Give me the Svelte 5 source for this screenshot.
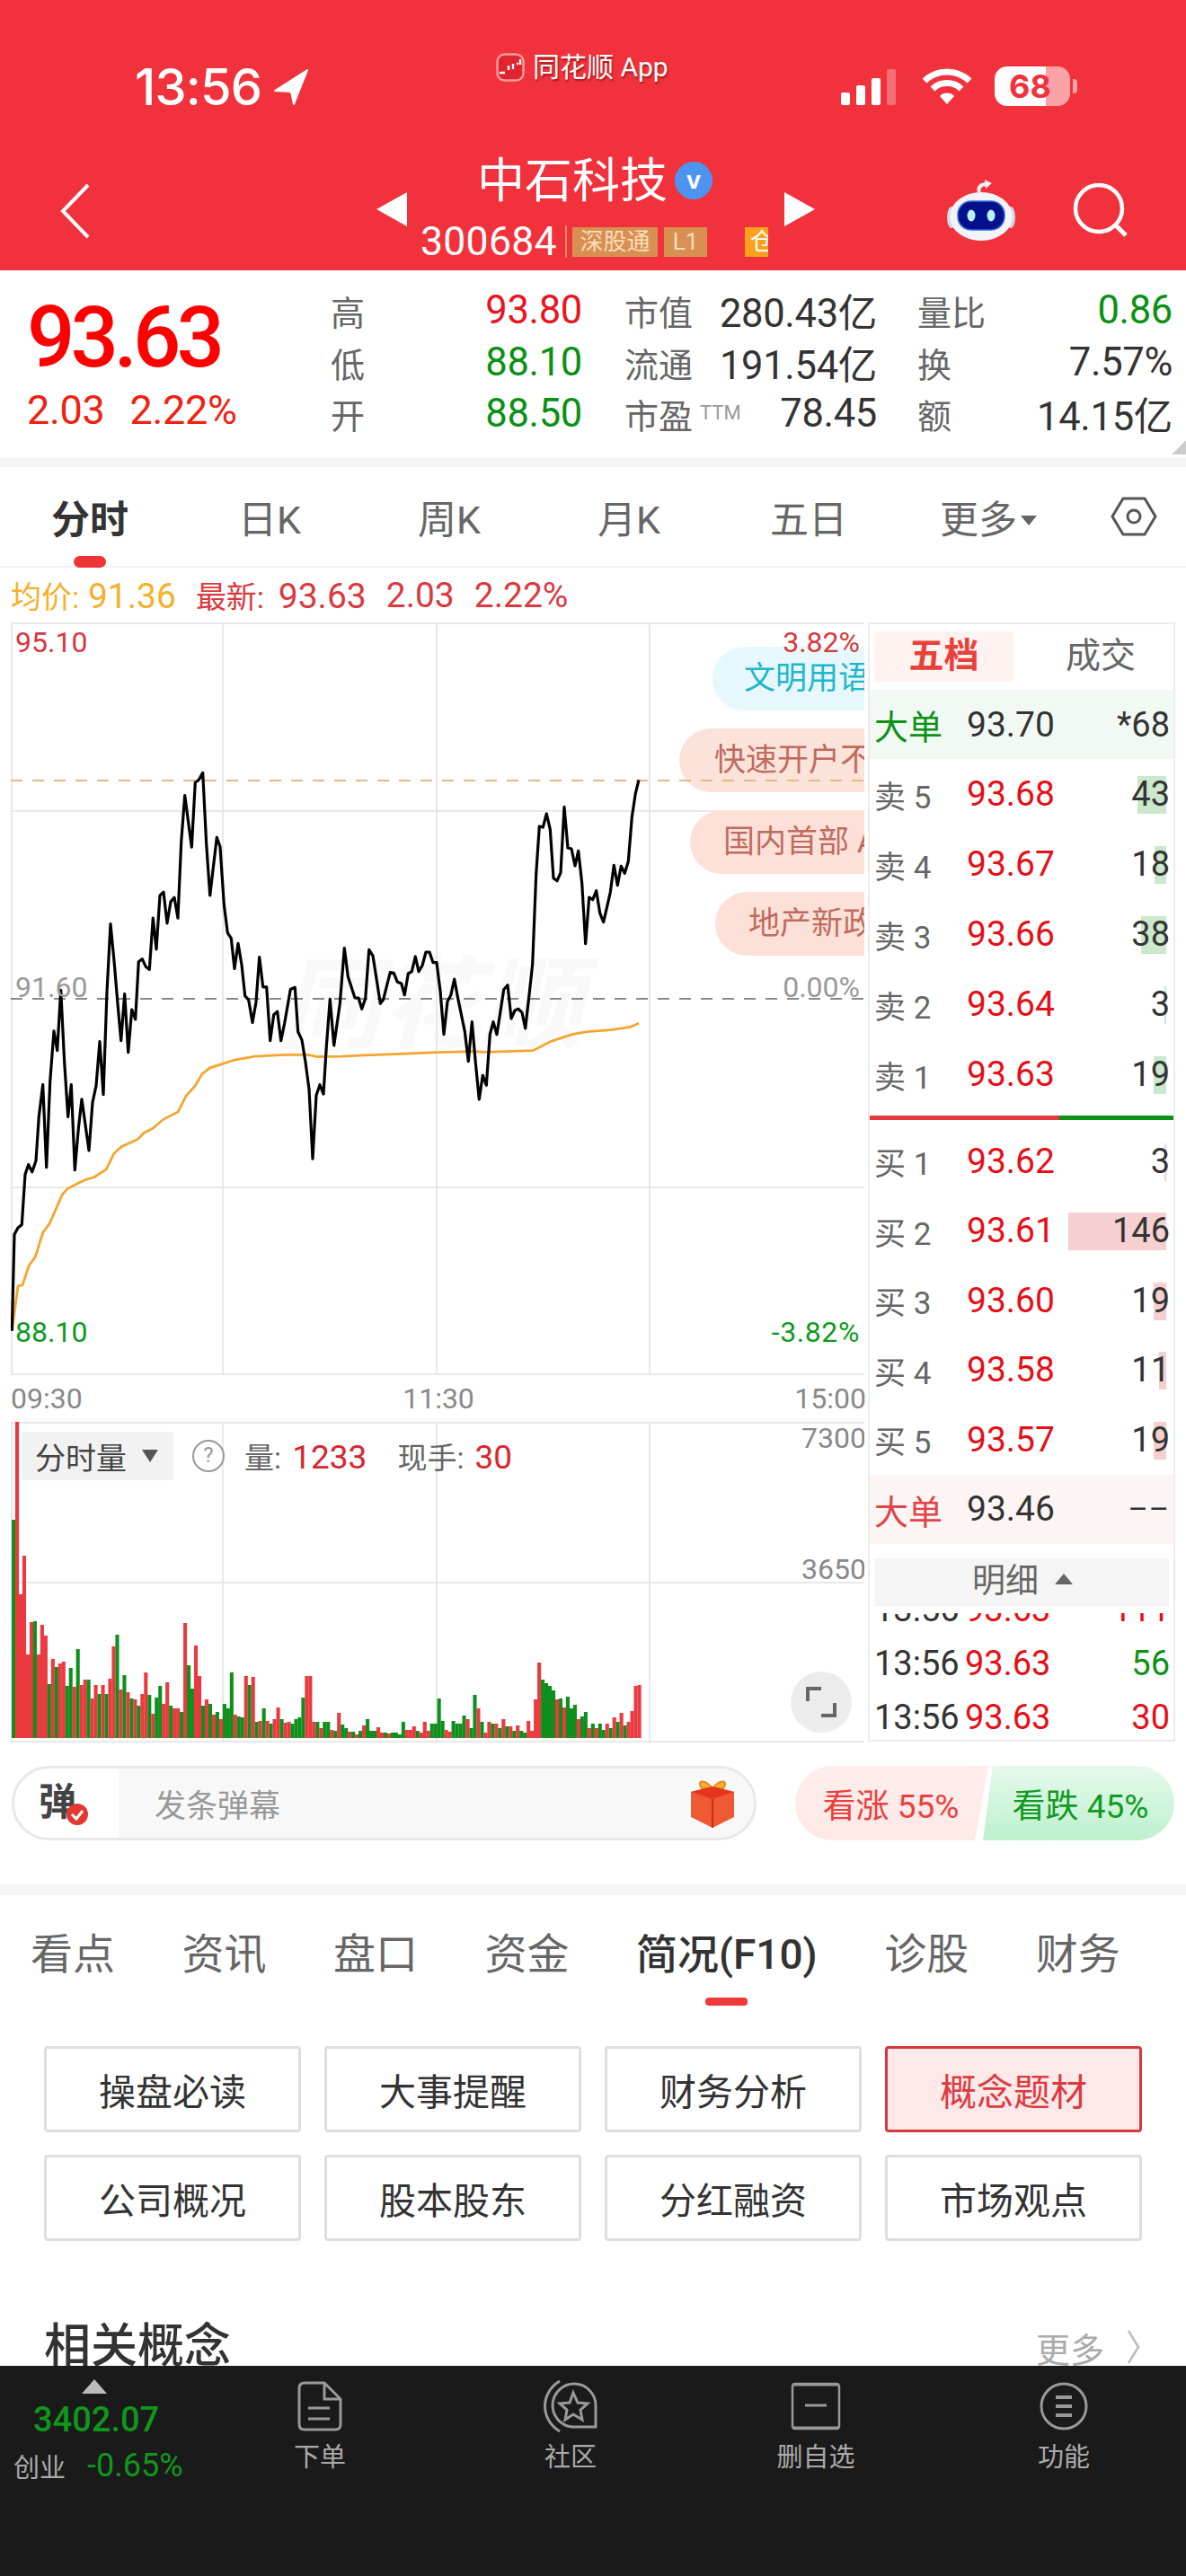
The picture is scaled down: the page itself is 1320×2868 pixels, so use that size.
<script>
  const z8 = [[40,1480],[48,1232],[60,1215],[73,1207],[84,1078],[95,1053],[107,1072],[120,1043],[130,930],[143,848],[155,1060],[167,840],[180,710],[191,760],[203,605],[215,790],[227,930],[238,848],[250,1067],[262,960],[273,885],[297,1017],[309,893],[321,850],[333,737],[345,873],[357,610],[369,435],[381,530],[393,640],[404,735],[416,615],[428,765],[440,655],[452,680],[463,532],[475,525],[487,545],[499,552],[511,420],[522,500],[534,362],[546,353],[558,433],[570,378],[582,367],[594,420],[605,225],[617,105],[640,238],[652,72],[664,65],[677,47],[689,230],[701,362],[724,213],[735,237],[748,385],[760,458],[772,472],[783,550],[795,485],[807,540],[818,620],[830,630],[843,688],[855,635],[866,520],[878,597],[890,597],[902,735],[914,668],[926,660],[938,735],[950,690],[970,603],[985,598],[995,712],[1008,733],[1020,790],[1032,860],[1044,1038],[1056,875],[1068,848],[1080,872],[1090,750],[1102,628],[1115,747],[1135,640],[1150,497],[1162,570],[1185,625],[1197,625]];
  const z9 = [[248,850],[260,815],[272,652],[285,672],[310,832],[320,818],[343,728],[355,730],[367,760],[380,765],[391,803],[403,732],[415,725],[427,675],[438,725],[450,705],[462,660],[474,660],[486,695],[498,695],[510,790],[522,935],[534,825],[545,805],[557,750],[569,815],[592,925],[604,1025],[616,893],[628,1030],[640,1152],[652,1072],[664,1105],[676,935],[687,893],[699,935],[722,785],[735,770],[747,882],[759,855],[771,850],[783,862],[794,915],[806,810],[818,700],[830,400],[841,240],[853,243],[865,198],[877,250],[888,413],[900,422],[912,395],[924,175],[936,312],[948,315],[960,372],[971,322],[983,430],[995,632],[1007,477],[1019,485],[1031,455],[1043,530],[1055,560],[1078,460],[1090,370],[1102,437],[1114,373],[1126,397],[1138,357],[1150,210],[1162,130],[1173,85]];
  const a8 = [[40,1480],[60,1365],[75,1362],[97,1312],[118,1290],[143,1228],[165,1205],[185,1170],[208,1130],[225,1115],[255,1103],[285,1092],[315,1085],[355,1065],[380,1025],[405,1007],[460,988],[480,972],[510,960],[545,937],[595,917],[620,878],[652,850],[675,820],[700,805],[780,785],[850,775],[950,771],[1030,771],[1060,776],[1140,775],[1200,773]];
  const a9 = [[280,1004],[500,995],[620,992],[660,994],[820,989],[880,958],[950,935],[1000,926],[1080,920],[1145,910],[1173,898]];
  const toPts = (p8, p9) => [
    ...p8.map(([x, y]) => [x / 3 - 12, 840 + y / 2.306 - 693]),
    ...p9.map(([x, y]) => [x / 3 + 320 - 12, 840 + y / 3 - 693])
  ].map(([x, y]) => x.toFixed(1) + ',' + y.toFixed(1)).join(' ');
  const priceLine = toPts(z8, z9);
  const avgLine = toPts(a8, a9);

  const r = 'r', g = 'g';
  const vols = [[243,g],[352,r],[160,r],[203,r],[93,r],[129,r],[130,g],[93,r],[126,r],[114,r],[60,g],[88,r],[79,g],[83,r],[85,r],[58,g],[78,g],[57,r],[99,g],[59,r],[65,r],[65,g],[44,r],[59,r],[49,g],[59,r],[49,g],[66,r],[102,r],[115,g],[54,r],[70,g],[51,r],[44,g],[43,r],[36,g],[49,r],[73,r],[48,g],[27,r],[45,g],[58,g],[38,r],[62,r],[36,g],[33,r],[33,r],[29,g],[128,r],[81,g],[55,g],[103,r],[69,r],[36,g],[43,r],[38,g],[26,r],[29,g],[21,r],[38,g],[33,g],[73,g],[26,r],[24,g],[23,g],[69,r],[59,g],[68,r],[18,g],[19,r],[33,g],[19,r],[16,g],[21,r],[34,r],[21,g],[17,r],[18,r],[16,g],[21,g],[23,g],[45,g],[69,r],[69,r],[18,r],[18,g],[11,r],[18,g],[18,g],[9,r],[8,g],[28,r],[15,g],[11,g],[7,r],[7,g],[4,r],[8,g],[14,r],[21,g],[8,g],[8,g],[12,r],[6,r],[6,g],[5,r],[6,g],[6,g],[4,g],[18,g],[9,r],[9,r],[13,r],[8,g],[6,r],[18,r],[8,r],[16,g],[16,g],[44,g],[19,g],[9,r],[7,r],[19,g],[16,g],[16,g],[25,g],[21,r],[11,g],[48,g],[33,r],[18,g],[6,r],[18,r],[16,g],[16,r],[11,g],[21,r],[13,g],[13,r],[8,g],[14,r],[8,g],[6,g],[19,r],[8,r],[43,r],[84,r],[65,g],[61,g],[58,g],[53,g],[43,r],[44,g],[34,r],[46,g],[33,g],[37,g],[21,r],[24,g],[29,g],[11,r],[16,g],[11,r],[16,g],[9,g],[16,r],[11,g],[23,r],[18,g],[28,r],[14,g],[18,r],[30,r],[58,r],[59,r]];

  const topStats = [
    [{ l: '高', v: '93.80', c: 'red' }, { l: '低', v: '88.10', c: 'green' }, { l: '开', v: '88.50', c: 'green' }],
    [{ l: '市值', v: '280.43亿' }, { l: '流通', v: '191.54亿' }, { l: '市盈', sup: 'TTM', v: '78.45' }],
    [{ l: '量比', v: '0.86', c: 'green' }, { l: '换', v: '7.57%' }, { l: '额', v: '14.15亿' }]
  ];
  const tabs = ['分时', '日K', '周K', '月K', '五日'];
  const sells = [['卖 5', '93.68', '43', 32], ['卖 4', '93.67', '18', 13], ['卖 3', '93.66', '38', 28], ['卖 2', '93.64', '3', 2], ['卖 1', '93.63', '19', 14]];
  const buys = [['买 1', '93.62', '3', 2], ['买 2', '93.61', '146', 109], ['买 3', '93.60', '19', 14], ['买 4', '93.58', '11', 8], ['买 5', '93.57', '19', 14]];
  const sections = ['看点', '资讯', '盘口', '资金', '简况(F10)', '诊股', '财务'];
  const btns = ['操盘必读', '大事提醒', '财务分析', '概念题材', '公司概况', '股本股东', '分红融资', '市场观点'];
</script>

<div class="page">
  <header class="hdr">
    <div class="status">
      <div class="st-left">
        <span class="clock">13:56</span>
        <svg width="42" height="42" viewBox="0 0 42 42"><path d="M39 2 L3 25 L21 26 L24 40 Z" fill="#fff" stroke="#fff" stroke-width="2" stroke-linejoin="round"/></svg>
      </div>
      <div class="st-mid">
        <svg width="32" height="32" viewBox="0 0 32 32"><rect x="1.5" y="1.5" width="29" height="29" rx="8" fill="#de2530" stroke="#f99" stroke-width="2.5"/><path d="M4 22 H10 M14 19 V14 M19 18 V12 M23 12 H25 M27 13 V7" stroke="#fff" stroke-width="2.4"/></svg>
        <span>同花顺 App</span>
      </div>
      <div class="st-right">
        <svg width="66" height="42" viewBox="0 0 66 42"><rect x="1" y="28" width="10" height="14" rx="2" fill="#fff"/><rect x="18" y="20" width="10" height="22" rx="2" fill="#fff"/><rect x="35" y="12" width="10" height="30" rx="2" fill="#fff"/><rect x="52" y="2" width="10" height="40" rx="2" fill="#fff" opacity=".3"/></svg>
        <svg width="58" height="42" viewBox="0 0 58 42"><g fill="none" stroke="#fff" stroke-width="7"><path d="M4 15 A36 36 0 0 1 54 15"/><path d="M13 24 A23 23 0 0 1 45 24"/></g><path d="M21 32 A11 11 0 0 1 37 32 L29 41 Z" fill="#fff"/></svg>
        <div class="batt"><span>68</span></div>
      </div>
    </div>
    <div class="titlebar">
      <svg class="back" width="36" height="62" viewBox="0 0 36 62"><path d="M32 2 L4 31 L32 60" fill="none" stroke="#fff" stroke-width="4"/></svg>
      <div class="arrow-l"></div>
      <div class="title-mid">
        <div class="t-name">中石科技<span class="vbadge">v</span></div>
        <div class="t-code"><span class="code">300684</span><span class="sep"></span><span class="tag">深股通</span><span class="tag l1">L1</span><span class="tag cang">仓</span></div>
      </div>
      <div class="arrow-r"></div>
      <svg class="robot" width="76" height="68" viewBox="0 0 76 68">
        <path d="M36 14 C34 8 38 5 44 5" fill="none" stroke="#f0f0f4" stroke-width="4"/>
        <path d="M42 0 L50 4 L43 10 Z" fill="#f0f0f4"/>
        <ellipse cx="5" cy="42" rx="5" ry="12" fill="#cfd6e6"/><ellipse cx="71" cy="42" rx="5" ry="12" fill="#cfd6e6"/>
        <ellipse cx="38" cy="41" rx="35" ry="27" fill="#f2f4fa"/>
        <rect x="12" y="24" width="52" height="32" rx="15" fill="#05118c" stroke="#3a6be0" stroke-width="1.5"/>
        <ellipse cx="27" cy="40" rx="4.5" ry="6.5" fill="#b8f1f8"/><ellipse cx="49" cy="40" rx="4.5" ry="6.5" fill="#b8f1f8"/>
      </svg>
      <svg class="search" width="64" height="64" viewBox="0 0 64 64"><circle cx="31" cy="28" r="26" fill="none" stroke="#fff" stroke-width="4.5"/><path d="M50 47 L61 58" stroke="#fff" stroke-width="5"/></svg>
    </div>
  </header>

  <section class="quote">
    <div class="q-main">
      <div class="q-price">93.63</div>
      <div class="q-chg"><span>2.03</span><span>2.22%</span></div>
    </div>
    {#each topStats as col, i}
      <div class="q-col q-col{i}">
        {#each col as s}
          <div class="q-row">
            <span class="q-l">{s.l}{#if s.sup}<sup>{s.sup}</sup>{/if}</span>
            <span class="q-v {s.c ?? ''}">{s.v}</span>
          </div>
        {/each}
      </div>
    {/each}
    <div class="corner"></div>
  </section>
  <div class="band band1"></div>

  <nav class="ktabs">
    {#each tabs as t, i}
      <div class="ktab" class:on={i === 0}>{t}</div>
    {/each}
    <div class="ktab more">更多<span class="caret"></span></div>
    <svg class="hex" width="52" height="46" viewBox="0 0 52 46"><path d="M14 3 H38 L50 23 L38 43 H14 L2 23 Z" fill="none" stroke="#555" stroke-width="3"/><circle cx="26" cy="23" r="7" fill="none" stroke="#555" stroke-width="3"/></svg>
  </nav>

  <div class="legend">
    <span class="avg"><i>均价:</i> 91.36</span>
    <span class="latest"><i>最新:</i> 93.63</span><span class="latest">2.03</span><span class="latest">2.22%</span>
  </div>

  <div class="market">
    <div class="charts">
      <div class="pricechart">
        <svg width="950" height="838" viewBox="0 0 950 838">
          <text class="wm" x="300" y="465">同花顺</text>
          <g stroke="#e8e8e8" stroke-width="2">
            <path d="M1 0 V838 M236 0 V838 M474 0 V838 M711 0 V838"/>
            <path d="M0 1 H950 M0 210 H950 M0 629 H950 M0 837 H950"/>
          </g>
        </svg>
        <span class="pill p1">文明用语</span>
        <span class="pill p2">快速开户不</span>
        <span class="pill p3">国内首部 A</span>
        <span class="pill p4">地产新政</span>
        <svg class="lines" width="950" height="838" viewBox="0 0 950 838">
          <path d="M0 176 H950" stroke="#e5b88c" stroke-width="2" stroke-dasharray="13 11"/>
          <path d="M0 419 H950" stroke="#888" stroke-width="2" stroke-dasharray="13 11"/>
          <polyline points={avgLine} fill="none" stroke="#f3a530" stroke-width="2.8"/>
          <polyline points={priceLine} fill="none" stroke="#000" stroke-width="3.2" stroke-linejoin="round"/>
        </svg>
        <span class="pl tl red2">95.10</span>
        <span class="pl tr red2">3.82%</span>
        <span class="pl ml">91.60</span>
        <span class="pl mr">0.00%</span>
        <span class="pl bl green2">88.10</span>
        <span class="pl br green2">-3.82%</span>
      </div>
      <div class="times"><span>09:30</span><span>11:30</span><span>15:00</span></div>
      <div class="volchart">
        <svg width="950" height="358" viewBox="0 0 950 358">
          <g stroke="#e8e8e8" stroke-width="2">
            <path d="M1 0 V358 M236 0 V358 M474 0 V358 M711 0 V358"/>
            <path d="M0 1 H950 M0 179 H950 M0 356 H950"/>
          </g>
          {#each vols as [h, c], i}
            <rect x={i * 3.98 + 1} y={352 - h} width="4.1" height={h} fill={c === 'r' ? '#ea3a3f' : '#0f8f1c'}/>
          {/each}
        </svg>
        <div class="vol-head">
          <span class="vol-sel">分时量<span class="vcaret"></span></span>
          <span class="help">?</span>
          <span class="vt">量: <b>1233</b></span>
          <span class="vt">现手: <b>30</b></span>
        </div>
        <span class="vl v1">7300</span>
        <span class="vl v2">3650</span>
        <div class="expand"><svg width="34" height="34" viewBox="0 0 34 34"><path d="M2 16 V2 H17 M32 18 V32 H17" fill="none" stroke="#666" stroke-width="4"/></svg></div>
      </div>
    </div>

    <aside class="book">
      <div class="bk-tabs"><span class="bk-on">五档</span><span class="bk-off">成交</span></div>
      <div class="bk-big gbg"><span class="bl-n gtxt">大单</span><span class="bl-p">93.70</span><span class="bl-q">*68</span></div>
      {#each sells as [n, p, q, w]}
        <div class="bk-row s"><span class="bl-n">{n}</span><span class="bl-p redp">{p}</span><span class="bl-q">{q}<i class="vb g" style="width:{w}px"></i></span></div>
      {/each}
      <div class="divider"><i></i><b></b></div>
      {#each buys as [n, p, q, w]}
        <div class="bk-row b"><span class="bl-n">{n}</span><span class="bl-p redp">{p}</span><span class="bl-q">{q}<i class="vb r" style="width:{w}px"></i></span></div>
      {/each}
      <div class="bk-big rbg"><span class="bl-n rtxt">大单</span><span class="bl-p">93.46</span><span class="bl-q dash">––</span></div>
      <div class="mx">明细<span class="mxcaret"></span></div>
      <div class="ticks">
        <div class="tick clip"><span>13:56</span><span class="redp">93.63</span><span class="redp tq">111</span></div>
        <div class="tick"><span>13:56</span><span class="redp">93.63</span><span class="gq tq">56</span></div>
        <div class="tick"><span>13:56</span><span class="redp">93.63</span><span class="redp tq">30</span></div>
      </div>
    </aside>
  </div>

  <div class="actions">
    <div class="dm">
      <div class="dm-l"><span class="dan">弹</span><svg class="dm-check" width="24" height="24" viewBox="0 0 24 24"><circle cx="12" cy="12" r="12" fill="#e5362f"/><path d="M6 12 L11 17 L18 8" fill="none" stroke="#fff" stroke-width="3"/></svg></div>
      <div class="dm-r">
        <span>发条弹幕</span>
        <svg width="52" height="54" viewBox="0 0 52 54"><path d="M26 10 C16 -2 8 2 14 10 Z M26 10 C36 -2 44 2 38 10 Z" fill="#f4b32f" stroke="#e98a1c" stroke-width="2"/><path d="M2 14 L26 8 L50 14 V42 L26 54 L2 42 Z" fill="#ef5a34"/><path d="M2 14 L26 22 L50 14 L26 8 Z" fill="#e4351e"/><path d="M26 22 V54" stroke="#c92a16" stroke-width="2"/></svg>
      </div>
    </div>
    <div class="vote">
      <div class="up">看涨 55%</div>
      <div class="down">看跌 45%</div>
    </div>
  </div>
  <div class="band band2"></div>

  <nav class="stabs">
    {#each sections as s, i}
      <div class="stab s{i}" class:on={i === 4}>{s}</div>
    {/each}
  </nav>

  <div class="btngrid">
    {#each btns as b, i}
      <div class="btn" class:act={i === 3}>{b}</div>
    {/each}
  </div>

  <div class="concept">
    <h2>相关概念</h2>
    <span class="cmore">更多<svg width="18" height="40" viewBox="0 0 18 40"><path d="M3 2 L14 20 L3 38" fill="none" stroke="#bbb" stroke-width="2.5"/></svg></span>
  </div>

  <footer class="foot">
    <div class="idx">
      <div class="tri"></div>
      <div class="idx-v">3402.07</div>
      <div class="idx-b"><span>创业</span><b>-0.65%</b></div>
    </div>
    <div class="fi f1">
      <svg width="50" height="56" viewBox="0 0 50 56"><path d="M2 8 Q2 2 8 2 H30 L48 20 V48 Q48 54 42 54 H8 Q2 54 2 48 Z M30 2 V20 H48" fill="none" stroke="#999" stroke-width="3"/><path d="M12 30 H36 M12 42 H36" stroke="#999" stroke-width="3"/></svg>
      <span>下单</span>
    </div>
    <div class="fi f2">
      <svg width="60" height="58" viewBox="0 0 60 58"><path d="M18 1 C-4 14 -4 44 18 57" fill="none" stroke="#999" stroke-width="3"/><path d="M58 52 H32 A24 24 0 1 1 58 29 Z" fill="none" stroke="#999" stroke-width="3"/><path d="M33 14 L38 25 L49 26 L41 33 L43 44 L33 38 L24 44 L26 33 L18 26 L29 25 Z" fill="none" stroke="#999" stroke-width="3"/></svg>
      <span>社区</span>
    </div>
    <div class="fi f3">
      <svg width="56" height="54" viewBox="0 0 56 54"><rect x="2" y="2" width="52" height="50" rx="3" fill="none" stroke="#999" stroke-width="2.5"/><path d="M2 3 H54 M2 51 H54" stroke="#999" stroke-width="3"/><path d="M16 26 H40" stroke="#999" stroke-width="3"/></svg>
      <span>删自选</span>
    </div>
    <div class="fi f4">
      <svg width="54" height="54" viewBox="0 0 54 54"><circle cx="27" cy="27" r="25" fill="none" stroke="#999" stroke-width="3"/><path d="M18 17 H36 M18 27 H36 M18 37 H36" stroke="#999" stroke-width="4"/></svg>
      <span>功能</span>
    </div>
  </footer>
</div>

<style>
  :global(body) { margin: 0; background: #fff; }
  .page {
    width: 1320px; height: 2868px; overflow: hidden; position: relative; background: #fff;
    font-family: Roboto, "Noto Sans CJK SC", sans-serif; color: #333;
  }
  svg { display: block; }
  i { font-style: normal; }

  /* header */
  .hdr { background: #f1323c; height: 301px; color: #fff; }
  .status { height: 160px; position: relative; display: flex; justify-content: space-between; align-items: flex-start; padding: 74px 129px 0 150px; box-sizing: border-box; }
  .st-left { display: flex; align-items: center; gap: 12px; }
  .clock { font: 500 56px/46px Inter, Roboto, sans-serif; letter-spacing: -.8px; }
  .st-mid { position: absolute; left: 552px; top: 58px; display: flex; align-items: center; gap: 9px; font-size: 30px; line-height: 34px; text-shadow: 1px 2px 2px rgba(90,0,0,.55); }
  .st-right { display: flex; align-items: center; gap: 24px; }
  .batt { position: relative; width: 84px; height: 44px; border-radius: 14px; background: linear-gradient(90deg, #fff 68%, #f9a3a6 68%); display: flex; align-items: center; padding-left: 16px; box-sizing: border-box; }
  .batt span { color: #f1323c; font: 700 36px/1 Inter, sans-serif; }
  .batt::after { content: ''; position: absolute; right: -8px; top: 14px; width: 5px; height: 16px; border-radius: 0 4px 4px 0; background: #f9a3a6; }

  .titlebar { height: 141px; position: relative; }
  .titlebar > svg, .arrow-l, .arrow-r { position: absolute; }
  .back { left: 66px; top: 44px; }
  .arrow-l { left: 419px; top: 54px; border: 19px solid transparent; border-left: 0; border-right: 34px solid #fff; }
  .arrow-r { left: 873px; top: 54px; border: 19px solid transparent; border-right: 0; border-left: 34px solid #fff; }
  .robot { left: 1054px; top: 40px; }
  .search { left: 1192px; top: 44px; }
  .title-mid { position: absolute; left: 468px; top: 10px; width: 400px; }
  .t-name { font-size: 53px; line-height: 64px; display: flex; align-items: center; padding-left: 63px; }
  .vbadge { width: 42px; height: 42px; border-radius: 50%; background: #4d94ee; display: inline-flex; align-items: center; justify-content: center; font: 700 28px/1 "Liberation Sans", sans-serif; margin-left: 8px; margin-top: -2px; }
  .t-code { display: flex; align-items: center; height: 34px; margin-top: 18px; }
  .code { font-size: 44.5px; letter-spacing: 0.3px; width: 161px; }
  .sep { width: 2px; height: 36px; background: #e58a60; margin: 0 6px 0 0; }
  .tag { background: #d98f52; color: #f7ddba; font-size: 26px; height: 33px; line-height: 33px; width: 95px; box-sizing: border-box; text-align: center; margin-right: 7px; }
  .tag.l1 { width: 48px; margin-right: 42px; }
  .tag.cang { background: #fba21c; width: 26px; padding-left: 6px; overflow: hidden; margin: 0; text-align: left; color: #fff; white-space: nowrap; }

  /* quote */
  .quote { height: 209px; position: relative; display: grid; grid-template-columns: 368px 280px 47px 281px 45px 284px; box-sizing: border-box; padding-top: 16px; }
  .q-main { padding-left: 30px; }
  .q-price { color: #f00; font-size: 94px; line-height: 86px; font-weight: 500; margin-top: 16px; letter-spacing: -5px; }
  .q-chg { color: #e21; font-size: 45px; line-height: 50px; display: flex; gap: 28px; margin-top: 13px; letter-spacing: -.3px; }
  .q-col { display: flex; flex-direction: column; }
  .q-col0 { grid-column: 2; } .q-col1 { grid-column: 4; } .q-col2 { grid-column: 6; }
  .q-row { height: 57.5px; display: flex; justify-content: space-between; align-items: center; }
  .q-l { font-size: 38px; color: #666; white-space: nowrap; display: flex; align-items: flex-start; }
  .q-l sup { font-size: 22px; color: #999; line-height: 30px; margin: 12px 0 0 8px; }
  .q-v { font-size: 43.5px; color: #333; letter-spacing: -.3px; }
  .q-v.red { color: #e8151e; }
  .q-v.green { color: #099113; }
  .corner { position: absolute; right: 0; bottom: 4px; border-style: solid; border-width: 0 0 16px 16px; border-color: transparent transparent #ccc transparent; }
  .band { background: #f5f5f5; }
  .band1 { height: 10px; }

  /* k tabs */
  .ktabs { height: 112px; border-bottom: 2px solid #f0f0f0; box-sizing: border-box; display: grid; grid-template-columns: repeat(6, 200px) 120px; align-items: center; position: relative; }
  .ktab { font-size: 43px; color: #666; text-align: center; position: relative; }
  .ktab.on { color: #333; font-weight: 700; }
  .ktab.on::after { content: ''; position: absolute; left: 82px; top: 75px; width: 36px; height: 13px; background: #ee3535; border-radius: 7px; }
  .caret { display: inline-block; border: 9px solid transparent; border-top: 11px solid #666; border-bottom: 0; margin: 0 0 6px 4px; vertical-align: middle; }
  .hex { margin-left: 36px; }

  .legend { height: 61px; display: flex; align-items: center; padding-left: 12px; font-size: 39px; color: #d93a3f; white-space: nowrap; }
  .legend i { font-size: 34px; }
  .legend .avg { color: #f4b12c; margin-right: 22px; }
  .legend .latest { margin-right: 22px; }
  .legend .latest i { margin-right: 6px; }

  /* market */
  .market { display: flex; height: 1247px; padding-left: 12px; box-sizing: border-box; }
  .charts { width: 950px; margin-right: 4px; flex: none; }
  .pricechart { height: 838px; width: 950px; position: relative; overflow: hidden; }
  .lines { position: absolute; left: 0; top: 0; }
  .wm { font: italic 700 112px "Noto Sans CJK SC", sans-serif; fill: #f9f9f9; }
  .pl { position: absolute; font-size: 32px; line-height: 36px; color: #999; }
  .tl { left: 5px; top: 4px; } .tr { right: 5px; top: 4px; }
  .ml { left: 5px; top: 388px; } .mr { right: 5px; top: 388px; }
  .bl { left: 5px; top: 772px; } .br { right: 5px; top: 772px; letter-spacing: .6px; }
  .red2 { color: #d9363e; } .green2 { color: #0d9a1c; }
  .pill { position: absolute; height: 71px; line-height: 71px; border-radius: 36px 0 0 36px; font-size: 35px; white-space: nowrap; padding-left: 37px; width: 400px; box-sizing: border-box; }
  .p1 { left: 781px; top: 27px; background: #e6f8fb; color: #22b6cc; padding-left: 35px; }
  .p2 { left: 744px; top: 118px; background: #fbe3d9; color: #bf6b60; padding-left: 39px; }
  .p3 { left: 756px; top: 209px; background: #fde1d8; color: #bf6b60; }
  .p4 { left: 784px; top: 300px; background: #fde1d8; color: #bf6b60; }

  .times { height: 52px; display: flex; justify-content: space-between; align-items: center; font-size: 32px; color: #888; margin-right: -2px; }
  .volchart { height: 358px; width: 950px; position: relative; overflow: hidden; }
  .vol-head { position: absolute; left: 12px; top: 11px; display: flex; align-items: center; font-size: 33px; color: #666; }
  .vol-sel { background: #f2f2f2; height: 54px; width: 169px; border-radius: 4px; display: flex; align-items: center; padding-left: 15px; box-sizing: border-box; color: #444; font-size: 34px; }
  .vcaret { border: 9px solid transparent; border-top: 14px solid #555; border-bottom: 0; margin-left: 17px; }
  .help { width: 36px; height: 36px; border: 2.5px solid #999; border-radius: 50%; margin: 0 22px 0 21px; text-align: center; line-height: 31px; font-size: 24px; color: #999; box-sizing: border-box; }
  .vt { margin-right: 34px; white-space: nowrap; }
  .vt b { font-weight: 400; color: #d9252e; font-size: 37px; margin-left: 4px; }
  .vl { position: absolute; right: -2px; font-size: 32px; line-height: 36px; color: #888; }
  .v1 { top: 0; } .v2 { top: 146px; }
  .expand { position: absolute; left: 868px; top: 278px; width: 68px; height: 68px; border-radius: 50%; background: #ececec; display: flex; align-items: center; justify-content: center; }

  /* order book */
  .book { width: 342px; box-sizing: border-box; height: 1246px; border: 2px solid #ececec; flex: none; overflow: hidden; }
  .bk-tabs { display: flex; height: 73px; padding-top: 8px; box-sizing: border-box; }
  .bk-on { width: 155px; height: 56px; margin-left: 5px; background: #fff2f0; color: #e8403a; font-size: 39px; font-weight: 700; text-align: center; line-height: 54px; border-radius: 4px; }
  .bk-off { flex: 1; color: #666; font-size: 39px; text-align: center; line-height: 54px; margin-left: 16px; }
  .bk-big, .bk-row { display: grid; grid-template-columns: 103px 1fr auto; align-items: center; padding: 0 4px 0 5px; position: relative; }
  .bk-big { height: 77px; }
  .bk-row.s { height: 78px; }
  .bk-row.b { height: 77.5px; }
  .gbg { background: #f2f9f4; }
  .rbg { background: #fdf4f4; }
  .bl-n { font-size: 35px; color: #666; white-space: nowrap; }
  .bk-big .bl-n { font-size: 38px; }
  .gtxt { color: #0c9217 !important; }
  .rtxt { color: #e0444a !important; }
  .bl-p { font-size: 39px; color: #333; }
  .redp { color: #e60f17; }
  .bl-q { font-size: 38px; color: #333; position: relative; z-index: 0; }
  .bl-q.dash { font-size: 34px; letter-spacing: 1px; }
  .vb { position: absolute; z-index: -1; right: 4px; top: 2px; bottom: 2px; height: 42px; }
  .vb.g { background: #cbe8cc; }
  .vb.r { background: #f6d0d0; }
  .divider { height: 5px; display: flex; margin: 7px 0 7px; }
  .divider i { width: 211px; background: #e3393c; }
  .divider b { flex: 1; background: #0c9217; }
  .mx { margin: 16px 5px 0; height: 53px; background: #f5f5f5; text-align: center; font-size: 37px; line-height: 52px; color: #666; padding-right: 36px; position: relative; }
  .mxcaret { position: absolute; left: 201px; top: 17px; border: 10px solid transparent; border-bottom: 12px solid #666; border-top: 0; }
  .ticks { height: 142px; margin-top: 8px; overflow: hidden; }
  .tick { display: grid; grid-template-columns: 101px 1fr auto; height: 60px; line-height: 60px; font-size: 38px; padding: 0 4px 0 5px; color: #333; }
  .tick.clip { margin-top: -34px; }
  .tq { text-align: right; }
  .gq { color: #0c9217; }

  /* actions */
  .actions { height: 158px; display: flex; padding: 26px 13px 0 13px; box-sizing: border-box; }
  .dm { width: 829px; height: 83px; border: 3px solid #e8e8e8; border-radius: 42px; box-sizing: border-box; display: flex; overflow: hidden; }
  .dm-l { width: 116px; position: relative; }
  .dan { position: absolute; left: 27px; top: 3px; font-size: 42px; font-weight: 700; color: #444; }
  .dm-check { position: absolute; left: 58px; top: 39px; }
  .dm-r { flex: 1; background: #f8f8f8; display: flex; align-items: center; justify-content: space-between; padding: 0 20px 0 40px; font-size: 35px; color: #999; }
  .vote { display: flex; margin-left: 43px; height: 83px; }
  .up, .down { font-size: 37px; display: flex; align-items: center; justify-content: center; height: 83px; white-space: nowrap; }
  .up { width: 215px; color: #e9403f; background: linear-gradient(#ffeeed, #fee8e6); border-radius: 42px 0 0 42px; clip-path: polygon(0 0, 100% 0, calc(100% - 15px) 100%, 0 100%); padding-right: 2px; box-sizing: border-box; }
  .down { width: 213px; margin-left: -6px; color: #109a20; background: linear-gradient(#e6f9ec, #bdf0cd); border-radius: 0 42px 42px 0; clip-path: polygon(11px 0, 100% 0, 100% 100%, 0 100%); padding-left: 4px; box-sizing: border-box; }
  .band2 { height: 12px; }

  /* section tabs */
  .stabs { height: 168px; position: relative; display: flex; padding-left: 34px; box-sizing: border-box; }
  .stab { font-size: 47px; color: #666; margin-top: 36px; line-height: 60px; margin-right: 74.5px; white-space: nowrap; height: 60px; }
  .stab.on { color: #333; font-weight: 500; position: relative; font-size: 46px; }
  .stab.on::after { content: ''; position: absolute; left: 77px; top: 78px; width: 47px; height: 9px; background: #f03a3a; border-radius: 4px; }

  .btngrid { display: grid; grid-template-columns: repeat(4, 286px); grid-auto-rows: 96px; column-gap: 26px; row-gap: 25px; padding-left: 49px; }
  .btn { border: 3px solid #dedede; border-radius: 4px; box-sizing: border-box; display: flex; align-items: center; justify-content: center; font-size: 41px; color: #333; }
  .btn.act { border-color: #d5383c; background: #fde9e9; color: #dc3a3e; }

  .concept { display: flex; justify-content: space-between; padding: 88px 49px 0; align-items: center; }
  .concept h2 { margin: 0; font-size: 52px; font-weight: 500; color: #333; line-height: 60px; }
  .cmore { font-size: 38px; color: #aaa; display: flex; align-items: center; gap: 24px; }

  /* footer */
  .foot { position: absolute; left: 0; right: 0; bottom: 0; height: 234px; background: #1a1a1a; color: #aaa; }
  .idx, .fi { position: absolute; }
  .idx { left: 15px; top: 15px; width: 200px; }
  .tri { position: absolute; left: 76px; top: 0; border: 14px solid transparent; border-top: 0; border-bottom: 16px solid #bbb; }
  .idx-v { position: absolute; left: 22px; top: 21px; color: #0f971c; font-size: 38px; line-height: 48px; font-weight: 500; }
  .idx-b { position: absolute; top: 75px; left: 0; display: flex; align-items: center; white-space: nowrap; }
  .idx-b span { font-size: 29px; color: #aaa; width: 82px; }
  .idx-b b { font-size: 36px; color: #0f971c; font-weight: 400; }
  .fi { top: 16px; display: flex; flex-direction: column; align-items: center; font-size: 29px; width: 120px; }
  .fi svg { height: 58px; }
  .fi span { margin-top: 8px; line-height: 40px; }
  .f1 { left: 296px; } .f2 { left: 575px; } .f3 { left: 848px; } .f4 { left: 1124px; }
</style>
